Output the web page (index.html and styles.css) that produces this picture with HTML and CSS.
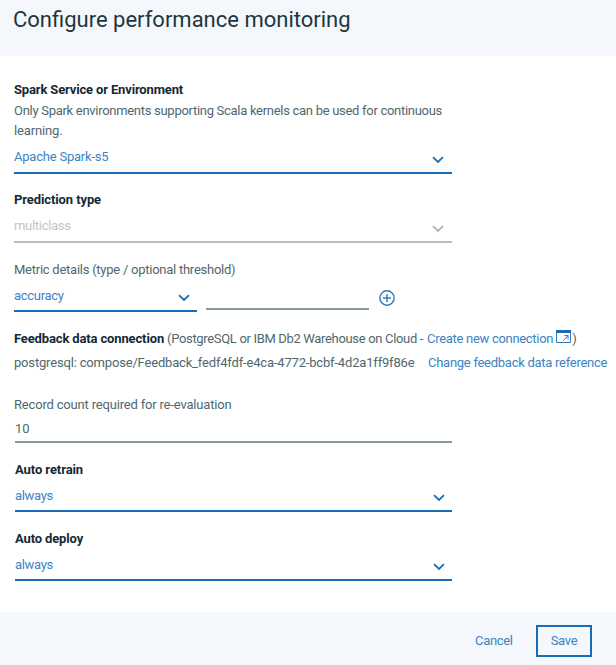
FILE: index.html
```html
<!DOCTYPE html>
<html lang="en">
<head>
<meta charset="utf-8">
<title>Configure performance monitoring</title>
<link rel="stylesheet" href="styles.css">
</head>
<body>
<main class="dialog">
  <header class="header"><h1 class="title">Configure performance monitoring</h1></header>
  <form class="form">
    <section class="field field-spark">
      <div class="label t-spark">Spark Service or Environment</div>
      <div class="desc">Only Spark environments supporting Scala kernels can be used for continuous<br><span class="t-learn">learning.</span></div>
      <div class="select"><span class="t-apache">Apache Spark-s5</span><svg class="chev" viewBox="0 0 12 8"><path d="M1 1.2 6 6l5-4.8"/></svg></div>
    </section>
    <section class="field field-type">
      <div class="label t-pred">Prediction type</div>
      <div class="select disabled"><span class="t-multi">multiclass</span><svg class="chev" viewBox="0 0 12 8"><path d="M1 1.2 6 6l5-4.8"/></svg></div>
    </section>
    <section class="field field-metric">
      <div class="t-metric">Metric details (type / optional threshold)</div>
      <div class="metric-row">
        <div class="select"><span class="t-acc">accuracy</span><svg class="chev" viewBox="0 0 12 8"><path d="M1 1.2 6 6l5-4.8"/></svg></div>
        <div class="threshold"></div>
        <svg class="add" viewBox="0 0 16 16"><circle cx="8" cy="8" r="7.2"/><path d="M8 4v8M4 8h8"/></svg>
      </div>
    </section>
    <section class="feedback">
      <div class="line"><span class="strong t-feed">Feedback data connection</span><span class="t-post">(PostgreSQL or IBM Db2 Warehouse on Cloud -</span><a class="t-create">Create new connection</a><svg class="launch" viewBox="0 0 15 13"><path d="M.5 1v11.5h14V1"/><path class="bar" d="M0 0h15v3H0z"/><path d="M7.5 10.5 12 5.5M8.5 5.5H12v4"/></svg><span>)</span></div>
      <div class="line"><span class="t-pg">postgresql: compose/Feedback_fedf4fdf-e4ca-4772-bcbf-4d2a1ff9f86e</span><a class="t-change">Change feedback data reference</a></div>
    </section>
    <section class="field field-count">
      <div class="t-record">Record count required for re-evaluation</div>
      <div class="number">10</div>
    </section>
    <section class="field field-auto">
      <div class="label t-retrain">Auto retrain</div>
      <div class="select"><span class="t-always">always</span><svg class="chev" viewBox="0 0 12 8"><path d="M1 1.2 6 6l5-4.8"/></svg></div>
    </section>
    <section class="field field-auto">
      <div class="label t-deploy">Auto deploy</div>
      <div class="select"><span class="t-always">always</span><svg class="chev" viewBox="0 0 12 8"><path d="M1 1.2 6 6l5-4.8"/></svg></div>
    </section>
  </form>
  <footer class="footer"><a class="t-cancel">Cancel</a><div class="save">Save</div></footer>
</main>
</body>
</html>
```
FILE: styles.css
```css
* { box-sizing: border-box; }
body {
  margin: 0;
  font: 13px/20px "Roboto", "Liberation Sans", sans-serif;
  color: #50676e;
  background: #fff;
}
.dialog { width: 616px; height: 665px; display: flex; flex-direction: column; overflow: hidden; }
.header { height: 56px; padding: 5px 13px; background: #f4f7fb; }
.title { margin: 0; font-size: 22px; line-height: 30px; font-weight: 400; color: #1d3640; }
.form { flex: 1; padding: 24px 14px 0; white-space: nowrap; }
.field { width: 437.5px; }
.label, .strong { font-weight: 700; color: #152935; }
.select {
  display: flex;
  justify-content: space-between;
  align-items: flex-start;
  height: 27px;
  color: #3d83c4;
  border-bottom: 2px solid #1b6bb5;
}
.chev { width: 12px; height: 8px; margin: 9px 7.5px 0 0; fill: none; stroke: #1b6bb5; stroke-width: 1.8; }
.disabled { color: #c4c4c4; border-color: #bebebe; }
.disabled .chev { stroke: #b0b0b0; }

.field-spark { height: 110px; }
.desc { height: 43px; padding-top: 1px; margin-bottom: 4px; letter-spacing: -0.29px; }
.field-type { height: 69px; }
.field-type .select { margin-top: 6px; }
.field-metric { height: 69px; padding-top: 1px; }
.metric-row { display: flex; margin-top: 6px; }
.metric-row .select { width: 183px; height: 26px; }
.metric-row .chev { margin: 8px 7px 0 0; }
.threshold { width: 163px; height: 24px; margin: 0 9.5px 0 9.4px; border-bottom: 2px solid #8699a2; }
.add { width: 16px; height: 16px; margin-top: 4px; fill: none; stroke: #3478bd; stroke-width: 1.4; }

.feedback { height: 66px; padding-top: 1px; }
.line { display: flex; height: 24px; }
.line > * { flex: none; }
.line a, .footer { color: #3d83c4; }
.launch { width: 15px; height: 13px; margin: 1px 1px 0 3px; fill: none; stroke: #3478bd; }
.launch .bar { fill: #1b6bb5; stroke: none; }

.field-count { height: 65px; padding-top: 1px; }
.number { width: 437px; height: 24px; margin: 4px 0 0 1px; border-bottom: 2px solid #8699a2; }
.field-auto { width: 437px; height: 69px; margin-left: 1px; padding-top: 1px; }
.field-auto .select { height: 26px; margin-top: 6px; }
.field-auto .chev { margin: 8px 7px 0 0; }

.footer { display: flex; height: 53px; background: #f4f7fb; padding: 13px 24px 0 475px; justify-content: space-between; line-height: 31px; }
.save { width: 56px; height: 32px; border: 2px solid #1b6bb5; text-align: center; line-height: 28px; letter-spacing: -0.3px; }

.t-spark { letter-spacing: -0.15px; }
.t-learn { letter-spacing: -0.15px; }
.t-apache { letter-spacing: -0.22px; }
.t-pred { letter-spacing: -0.1px; }
.t-multi { letter-spacing: -0.3px; }
.t-metric { letter-spacing: -0.25px; }
.t-acc { letter-spacing: -0.3px; }
.t-feed { letter-spacing: -0.14px; margin-right: 3px; }
.t-post { width: 260px; letter-spacing: -0.33px; }
.t-create { letter-spacing: -0.3px; }
.t-pg { width: 414px; letter-spacing: -0.175px; }
.t-change { letter-spacing: -0.27px; }
.t-record { letter-spacing: -0.18px; }
.t-retrain { letter-spacing: -0.08px; }
.t-deploy { letter-spacing: -0.14px; }
.t-always, .t-cancel { letter-spacing: -0.32px; }
```
